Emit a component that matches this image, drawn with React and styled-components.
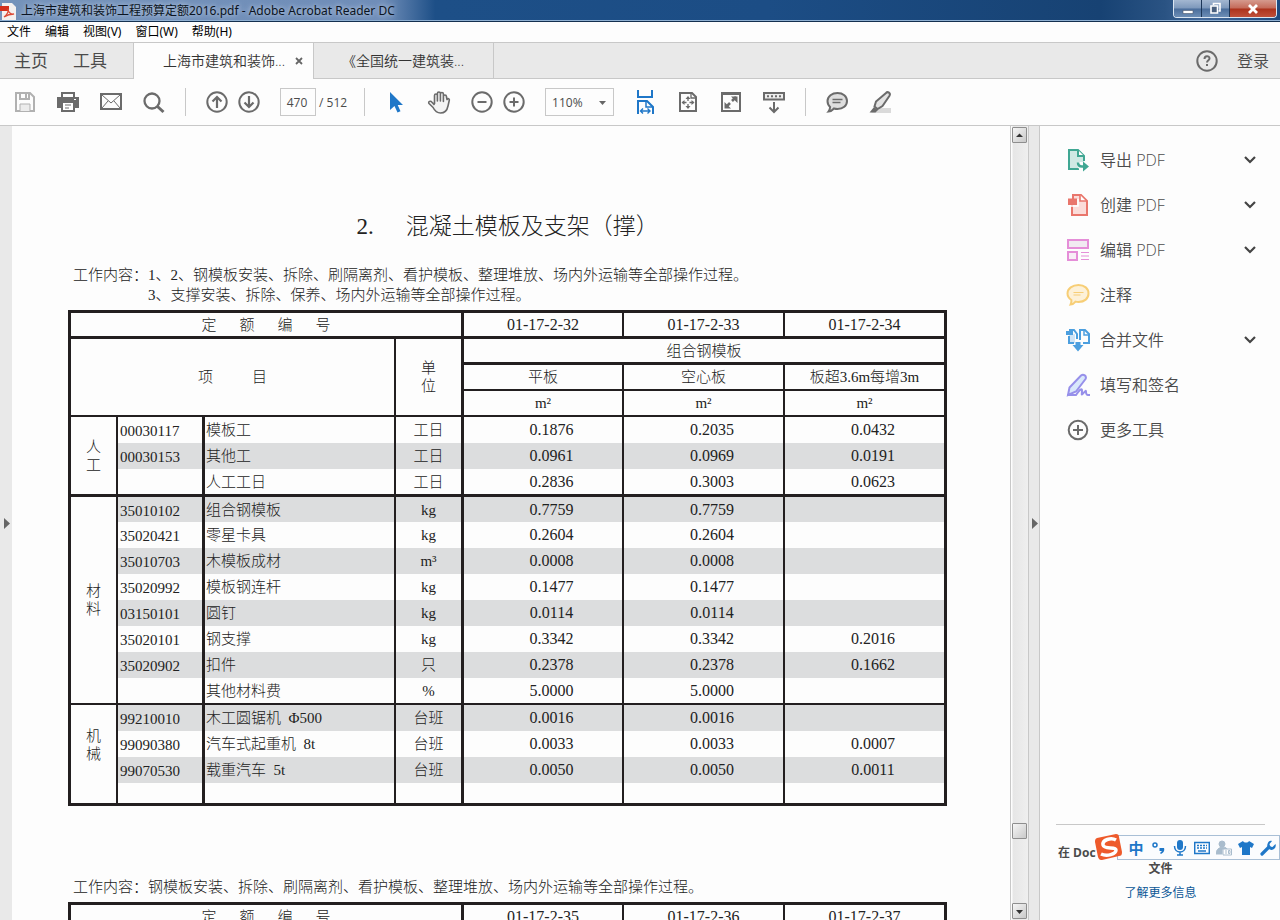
import React, { Fragment } from "react";
import styled, { createGlobalStyle, css } from "styled-components";

const colors = {
  icon: "#6b6b6b",
  text: "#4b4b4b",
  blue: "#1f77c8",
  line: "#c8c8c8",
  chrome: "#e9e9e9",
  paper: "#fdfdfd",
  ink: "#231f20",
  band: "#dcddde"
};

const fonts = {
  ui: '"Open Sans", "Noto Sans CJK SC", sans-serif',
  caption: '"Noto Sans", "Noto Sans CJK SC", sans-serif',
  page: '"Liberation Serif", "Noto Sans CJK SC", serif'
};

const GlobalStyle = createGlobalStyle`
  * {
    box-sizing: border-box;
  }
  body {
    margin: 0;
    background: ${colors.paper};
    font-family: ${fonts.ui};
    color: ${colors.text};
  }
  button {
    margin: 0;
    padding: 0;
    border: 0;
    background: none;
    color: inherit;
    font-family: inherit;
  }
`;

const Window = styled.div`
  display: flex;
  flex-direction: column;
  height: 100vh;
  overflow: hidden;
`;

/* title bar */

const TitleBar = styled.header`
  display: flex;
  flex: none;
  align-items: center;
  justify-content: space-between;
  height: 22px;
  border-bottom: 1px solid #14304f;
  box-shadow: inset 0 -1px 0 #8fb0d2;
  background: linear-gradient(
    90deg,
    #7593ba 0,
    #6f8db8 30%,
    #1d4f87 34%,
    #1c4d85 60%,
    #174273 86%,
    #2a5383 91%,
    #44699a 94%,
    #1d4a7f 100%
  );
`;

const Caption = styled.div`
  display: flex;
  align-items: center;
  gap: 5px;
  color: #0b1422;
  font-family: ${fonts.caption};
  font-size: 12px;
  line-height: 20px;
  white-space: nowrap;
  text-shadow: 0 0 6px #b9c9e0, 0 0 4px #a9bcd8;
`;

const WindowButtons = styled.div`
  display: flex;
  align-self: flex-start;
  margin-right: 3px;
  border: 1px solid #dbe6f2;
  border-top: 0;
  border-radius: 0 0 4px 4px;
  overflow: hidden;
`;

const WindowButton = styled.button`
  display: flex;
  align-items: center;
  justify-content: center;
  width: ${props => (props.$close ? 46 : 28)}px;
  height: 17px;
  border-right: ${props => (props.$close ? 0 : "1px solid #1c3658")};
  background: ${props =>
    props.$close
      ? "linear-gradient(#d59a8e 0, #c46a59 48%, #ac321c 52%, #c0503a 100%)"
      : "linear-gradient(#a3b7d1 0, #7d98bb 48%, #4a6d9b 52%, #6c8db5 100%)"};
`;

/* menu and tabs */

const MenuBar = styled.nav`
  display: flex;
  flex: none;
  align-items: center;
  gap: 14px;
  height: 20px;
  padding-left: 7px;
  font-family: ${fonts.caption};
`;

const MenuItem = styled.button`
  color: #000;
  font-size: 12px;
  line-height: 18px;
`;

const TabBar = styled.div`
  display: flex;
  flex: none;
  height: 37px;
  border-top: 1px solid ${colors.line};
  border-bottom: 1px solid ${colors.line};
  background: ${colors.chrome};
`;

const HomeTabs = styled.div`
  display: flex;
  gap: 25px;
  width: 134px;
  padding-left: 14px;
  border-right: 1px solid ${colors.line};
`;

const HomeTab = styled.button`
  font-size: 17px;
  line-height: 34px;
`;

const DocTab = styled.div`
  display: flex;
  align-items: center;
  width: 180px;
  height: ${props => (props.$active ? 36 : 35)}px;
  padding-left: ${props => (props.$active ? 29 : 28)}px;
  border-right: 1px solid ${colors.line};
  background: ${props => (props.$active ? colors.paper : "transparent")};
`;

const DocTabName = styled.button`
  color: #333;
  font-size: 14px;
  font-weight: 350;
  line-height: 34px;
  white-space: nowrap;
`;

const CloseTab = styled.button`
  display: flex;
  margin-left: 10px;
`;

const Account = styled.div`
  display: flex;
  align-items: center;
  gap: 18px;
  margin-left: auto;
  padding-right: 11px;
`;

const SignIn = styled.button`
  font-size: 16px;
  font-weight: 350;
  line-height: 34px;
`;

/* toolbar */

const Toolbar = styled.div`
  display: flex;
  flex: none;
  align-items: center;
  height: 47px;
  padding-left: 13px;
  border-bottom: 1px solid ${colors.line};
`;

const ToolGroup = styled.div`
  display: flex;
  align-items: center;
  gap: ${props => props.$gap}px;
`;

const ToolButton = styled.button`
  display: flex;
  width: 24px;
  height: 24px;
`;

const Divider = styled.span`
  width: 1px;
  height: 28px;
  margin: 0 ${props => props.$after}px 0 ${props => props.$before}px;
  background: ${colors.line};
`;

const PageBox = styled.label`
  display: flex;
  align-items: center;
  gap: 3px;
  margin-left: 19px;
  font-size: 12px;
`;

const PageInput = styled.input`
  width: 36px;
  height: 28px;
  padding: 0 2px 0 0;
  border: 1px solid ${colors.line};
  background: ${colors.paper};
  color: ${colors.text};
  font-family: ${fonts.ui};
  font-size: 12px;
  text-align: center;
`;

const ZoomBox = styled.span`
  display: flex;
  align-items: center;
  width: 69px;
  height: 28px;
  margin: 0 19px;
  padding-right: 6px;
  border: 1px solid ${colors.line};
`;

const ZoomSelect = styled.select`
  flex: 1;
  min-width: 0;
  padding-left: 6px;
  border: 0;
  appearance: none;
  background: transparent;
  color: ${colors.text};
  font-family: ${fonts.ui};
  font-size: 12px;
`;

/* body */

const Body = styled.div`
  display: flex;
  flex: 1;
  min-height: 0;
`;

const Gutter = styled.button`
  display: flex;
  flex: none;
  align-items: center;
  justify-content: center;
  width: 12px;
  background: ${colors.chrome};
`;

const Splitter = styled(Gutter)`
  border-left: 1px solid ${colors.line};
  border-right: 1px solid ${colors.line};
`;

const Viewer = styled.main`
  flex: 1;
  min-width: 0;
  padding: 85px 63px 0 56px;
  overflow: hidden;
  color: #222;
  font-family: ${fonts.page};
  font-weight: 300;
`;

const Scrollbar = styled.div`
  display: flex;
  flex: none;
  flex-direction: column;
  justify-content: space-between;
  width: 18px;
  border-left: 1px solid ${colors.line};
  background: linear-gradient(90deg, #fdfdfd 1px, #e6e6e6 2px, #efefef 100%);
`;

const ScrollButton = styled.button`
  display: flex;
  align-items: center;
  justify-content: center;
  width: 15px;
  height: 16px;
  margin: 1px 0 1px 1px;
  border: 1px solid #8e8e8e;
  border-radius: 1px;
  background: linear-gradient(135deg, #f6f6f6, #c9c9c9);
`;

const ScrollThumb = styled(ScrollButton)`
  margin-top: auto;
  margin-bottom: 63px;
`;

const PageTitle = styled.h1`
  display: flex;
  justify-content: center;
  gap: 32px;
  margin: 0 0 22px;
  font-size: 23px;
  font-weight: 300;
  line-height: 32px;
`;

const Notes = styled.div`
  display: flex;
  margin-bottom: 5px;
  padding-left: 5px;
  font-size: 15px;
  line-height: 20px;
  white-space: nowrap;
`;

const NoteLines = styled.div`
  display: flex;
  flex-direction: column;
`;

const Quota = styled.table`
  width: 100%;
  margin-bottom: 71px;
  border: 3px solid ${colors.ink};
  border-spacing: 0;
  table-layout: fixed;
  font-size: 15px;
  line-height: 18px;
`;

const cell = css`
  height: ${props => props.$height || 26}px;
  padding: 0;
  border: 0 solid ${colors.ink};
  border-left-width: ${props => props.$bl || 0}px;
  border-top-width: ${props => props.$bt || 0}px;
  font-weight: 300;
  text-align: center;
  white-space: pre;
`;

const Head = styled.th`
  ${cell};
`;

const Cell = styled.td`
  ${cell};
  background: ${props => (props.$band ? colors.band : "transparent")};
`;

const NameCell = styled(Cell)`
  padding-left: 1px;
  text-align: left;
`;

const NumberCell = styled(Cell)`
  padding-left: 17px;
  font-size: 16px;
`;

const CodeCell = styled(Cell)`
  padding: 2px 0 0 2px;
  text-align: left;
`;

const Code = styled.span`
  font-size: 16px;
`;

const Spread = styled.span`
  display: flex;
  justify-content: center;
  gap: ${props => props.$gap}px;
`;

const Stack = styled.span`
  display: flex;
  flex-direction: column;
  align-items: center;
  padding-bottom: ${props => props.$bottom || 0}px;
`;

/* right pane */

const ToolsPane = styled.aside`
  position: relative;
  display: flex;
  flex: none;
  flex-direction: column;
  width: 240px;
  padding: 12px 15px 0 16px;
`;

const ToolLink = styled.button`
  display: flex;
  align-items: center;
  gap: 10px;
  width: 100%;
  height: 45px;
  padding: 0 8px 2px 10px;
  font-size: 16px;
  font-weight: 350;
  line-height: 24px;
  text-align: left;
`;

const ToolLabel = styled.span`
  flex: 1;
`;

const Promo = styled.div`
  display: flex;
  flex-direction: column;
  height: 96px;
  margin-top: auto;
  padding-top: 20px;
  border-top: 1px solid ${colors.line};
  font-size: 12px;
  font-weight: 700;
  line-height: 16px;
`;

const PromoLead = styled.span`
  padding-left: 2px;
`;

const PromoTail = styled.span`
  text-align: center;
`;

const PromoLink = styled.a`
  margin-top: 8px;
  color: #0b5796;
  font-weight: 400;
  text-align: center;
  text-decoration: none;
`;

const InputBar = styled.div`
  position: absolute;
  right: 0;
  bottom: 60px;
  display: flex;
  align-items: center;
  gap: 6px;
  height: 25px;
  padding: 0 3px 0 10px;
  border: 1px solid #a9bfd6;
  background: #fbfcfe;
`;

const InputLogo = styled.svg`
  position: absolute;
  left: -23px;
  bottom: -2px;
`;

const InputButton = styled.button`
  display: flex;
  align-items: center;
  justify-content: center;
  width: 16px;
  height: 18px;
  color: ${colors.blue};
  font-size: 15px;
  font-weight: 700;
  line-height: 18px;
`;

const Icon = ({ size = 24, color = colors.icon, width = 2, children }) => (
  <svg
    width={size}
    height={size}
    viewBox={`0 0 ${size} ${size}`}
    fill="none"
    stroke={color}
    strokeWidth={width}
    aria-hidden="true"
  >
    {children}
  </svg>
);

const trianglePaths = {
  right: "M2 0v11l6-5.500z",
  up: "M1 7h7L4.500 3.500z",
  down: "M1 4h7L4.500 8z"
};

const Triangle = ({ dir = "right", color = "#666" }) => (
  <svg width="9" height="11" fill={color} aria-hidden="true">
    <path d={trianglePaths[dir]} />
  </svg>
);

const icons = {
  save: (
    <Icon color="#b1b1b1">
      <path d="M3 3h14l4 4v14H3z" />
      <path d="M7 3v6h9V3M13 4v4" />
      <path d="M7 21v-7h10v7" fill="#ececec" strokeWidth="1" />
    </Icon>
  ),
  print: (
    <Icon>
      <path d="M6 7V3h12v4" />
      <path d="M1 7h22v11H1z" fill={colors.icon} stroke="none" />
      <path d="M6 12h12v9H6z" fill="#fff" />
      <path d="M9 15h6M9 18h4" strokeWidth="1" />
      <path d="M18 9.500h2" stroke="#fff" strokeWidth="1" />
    </Icon>
  ),
  mail: (
    <Icon>
      <path d="M2 4h20v15H2z" />
      <path d="M3 5l9 8 9-8M3 18l6-7M21 18l-6-7" strokeWidth="1" />
    </Icon>
  ),
  search: (
    <Icon>
      <circle cx="10" cy="11" r="7.500" strokeWidth="2.300" />
      <path d="M15.500 16.500l6 5.500" strokeWidth="3" />
    </Icon>
  ),
  up: (
    <Icon>
      <circle cx="12" cy="12" r="9.700" />
      <path d="M12 18V7M7.500 11.500L12 7l4.500 4.500" strokeWidth="2.200" />
    </Icon>
  ),
  down: (
    <Icon>
      <circle cx="12" cy="12" r="9.700" />
      <path d="M12 6v11M7.500 12.500L12 17l4.500-4.500" strokeWidth="2.200" />
    </Icon>
  ),
  pointer: (
    <Icon>
      <path
        d="M6 2v18l4.500-4 3 6.500 3-1.300-2.800-6.200H19z"
        fill={colors.blue}
        stroke="none"
      />
    </Icon>
  ),
  hand: (
    <Icon width={1.6}>
      <path
        d="M7.500 14V5.500c0-2 2.900-2 2.900 0V11 3.500c0-2 3-2 3 0V11 4c0-2 3-2 3 0v7.500-5c0-2 3-2 3 0l.6 3c.8-1.500 2.800-1 2.300.8L21 16c-1 5-3.500 7-7.500 7-4.200 0-5.700-2-7.400-5.500L2 13.500c-1.200-2 1.500-3.200 3-1.300L7.500 15"
        fill="#f4f4f4"
        strokeLinejoin="round"
      />
    </Icon>
  ),
  minus: (
    <Icon>
      <circle cx="12" cy="12" r="9.700" />
      <path d="M7.500 12h9" />
    </Icon>
  ),
  plus: (
    <Icon>
      <circle cx="12" cy="12" r="9.700" />
      <path d="M7.500 12h9M12 7.500v9" />
    </Icon>
  ),
  fitWidth: (
    <Icon color={colors.blue}>
      <path d="M5 0v7h14V0" />
      <path d="M5 24V11h9l6 6v7" />
      <path d="M13 11v6h6" strokeWidth="1.500" />
      <path
        d="M8 21h9M10 18.500L7.500 21l2.500 2.500M14.500 18.500L17 21l-2.500 2.500"
        strokeWidth="1.400"
      />
    </Icon>
  ),
  fitPage: (
    <Icon>
      <path d="M4 3h12l4 4v14H4z" />
      <path d="M15 3v5h5" strokeWidth="1.300" />
      <path d="M12 7v4M12 14v4M6.500 12.500h4M13.500 12.500h4" strokeWidth="1.300" />
      <path
        d="M9.500 9l2.500-3 2.500 3zM9.500 16l2.500 3 2.500-3zM8.500 10l-3 2.500 3 2.500zM15.500 10l3 2.500-3 2.500z"
        fill={colors.icon}
        stroke="none"
      />
    </Icon>
  ),
  fullscreen: (
    <Icon>
      <path d="M3 3h18v18H3z" />
      <path d="M3 3.500h18" strokeWidth="3" />
      <path d="M13 11l4-4M11 13l-4 4" strokeWidth="2.600" />
      <path
        d="M12 6.500h6.500V13zM5.500 12v6.500H12z"
        fill={colors.icon}
        stroke="none"
      />
    </Icon>
  ),
  keyboardDown: (
    <Icon>
      <path d="M2 3h20v6.500H2z" fill="#eee" />
      <path d="M5 6.300h14" strokeDasharray="2 2" />
      <path d="M12 12v10M7.500 17.500L12 22l4.500-4.500" />
    </Icon>
  ),
  comment: (
    <Icon>
      <path
        d="M12.500 3c5.500 0 9.500 3.300 9.500 8s-4 8-9.500 8c-1.500 0-2.500-.2-3.500-.5-1.500 1.700-3.200 2.800-5.500 3 1.200-1.500 1.600-2.800 1.600-4.500C3.500 15.600 2.500 13.500 2.500 11c0-4.700 4.500-8 10-8z"
        fill="#dedede"
      />
      <path d="M7.500 9.500h10M7.500 12.500h8" strokeWidth="1.300" />
    </Icon>
  ),
  highlight: (
    <Icon>
      <path d="M8 18h15v5H3z" fill="#dadada" stroke="none" />
      <path d="M18 3c1.700-2 5 0 3.500 2.700L14.500 16l-5 3-3-2.500 1.500-5z" fill="#e3e3e3" />
      <path d="M6 17l4 3-2.500 2.500H1.500z" fill={colors.icon} stroke="none" />
    </Icon>
  ),
  help: (
    <Icon>
      <circle cx="12" cy="12" r="9.700" />
      <path d="M9.500 10c0-3.500 5-3.500 5-.6 0 1.800-2.500 1.800-2.500 4.200M12 15v2" />
    </Icon>
  ),
  exportPdf: (
    <Icon color="#40a793">
      <path d="M13 21H3V2h9l6 6v5" fill="#cfe9e4" />
      <path d="M12 2v6h6" fill="#fff" />
      <path d="M11 17c0-3 3-3 5-3h7v9h-9z" fill={colors.paper} stroke="none" />
      <path d="M12 14.500c0 3.500 2 4 4 4h3" strokeWidth="2.500" />
      <path d="M17 13.500l6 5-6 5z" fill="#40a793" stroke="none" />
    </Icon>
  ),
  createPdf: (
    <Icon color="#e9766c">
      <path d="M6 12v10h15V8l-6-6H7v4" fill="#fbdcd9" />
      <path d="M14 2v6h6" fill="#fff" strokeWidth="1.600" />
      <path d="M2 5.500h9v6.500H2z" fill="#e9766c" stroke="none" />
      <path d="M3 13h9V6" stroke="#fff" strokeWidth="1.500" />
    </Icon>
  ),
  editPdf: (
    <Icon color="#e58ed8">
      <path d="M2 2h20v8H2z" fill="#f1eaf1" />
      <path d="M2 14h9v8H2z" fill="#f8eef6" />
      <path d="M15 14.500h8M15 18h8M15 21.500h8" strokeWidth="1.200" />
    </Icon>
  ),
  note: (
    <Icon color="#f7ce76">
      <path
        d="M12.500 2c6 0 10 3.500 10 8.500s-4 8.500-10 8.500c-1 0-2-.1-3-.4-1.500 1.900-3.300 2.900-5 3 .8-1.600 1.100-3 .9-4.600C3 15.400 1.500 13.300 1.500 10.500 1.500 5.500 6.500 2 12.500 2z"
        fill="#fdf1d8"
      />
      <path d="M7.500 9.500h10M7.500 12h7" strokeWidth="1.200" />
    </Icon>
  ),
  combine: (
    <Icon color="#4c9fdf">
      <path d="M3 7v8h6V6" fill="#cfe4f6" stroke="none" />
      <path d="M3 8v7h5M3 2h5l3 4v5M14 12V2h5l4 4v9h-6" />
      <path d="M18 2v5h5" strokeWidth="1.500" />
      <path d="M0 3h7v4H0z" fill="#4c9fdf" stroke="none" />
      <path
        d="M9.500 14h5v3h3L12 23.500 6.500 17h3z"
        fill="#4c9fdf"
        stroke="none"
      />
    </Icon>
  ),
  sign: (
    <Icon color="#9790ea">
      <path d="M15 2.500c2.500-2 6 .5 4.500 3.500L10 18.500 2 22l1.500-7.500z" fill="#d9e8fb" />
      <path d="M1 22h9c4-6 6-7 6-4.500 0 4-1 5 1 3s3-4 3-1.500c0 3 1 3 4 3" />
    </Icon>
  ),
  more: (
    <Icon>
      <circle cx="12" cy="12" r="9.300" />
      <path d="M7 12h10M12 7v10" />
    </Icon>
  )
};

const fileTools = [
  ["save", "保存"],
  ["print", "打印"],
  ["mail", "邮件"],
  ["search", "查找"]
];
const viewTools = [
  ["fitWidth", "适合宽度"],
  ["fitPage", "适合页面"],
  ["fullscreen", "全屏"],
  ["keyboardDown", "工具栏"]
];

const sideTools = [
  { icon: "exportPdf", label: "导出 PDF", open: true },
  { icon: "createPdf", label: "创建 PDF", open: true },
  { icon: "editPdf", label: "编辑 PDF", open: true },
  { icon: "note", label: "注释" },
  { icon: "combine", label: "合并文件", open: true },
  { icon: "sign", label: "填写和签名" },
  { icon: "more", label: "更多工具" }
];

const groups = [
  {
    label: "人工",
    border: 2,
    lastHeight: 25,
    rows: [
      ["00030117", "模板工", "工日", "0.1876", "0.2035", "0.0432"],
      ["00030153", "其他工", "工日", "0.0961", "0.0969", "0.0191"],
      ["", "人工工日", "工日", "0.2836", "0.3003", "0.0623"]
    ]
  },
  {
    label: "材料",
    border: 3,
    lastHeight: 25,
    bandFirst: true,
    rows: [
      ["35010102", "组合钢模板", "kg", "0.7759", "0.7759", ""],
      ["35020421", "零星卡具", "kg", "0.2604", "0.2604", ""],
      ["35010703", "木模板成材", "m³", "0.0008", "0.0008", ""],
      ["35020992", "模板钢连杆", "kg", "0.1477", "0.1477", ""],
      ["03150101", "圆钉", "kg", "0.0114", "0.0114", ""],
      ["35020101", "钢支撑", "kg", "0.3342", "0.3342", "0.2016"],
      ["35020902", "扣件", "只", "0.2378", "0.2378", "0.1662"],
      ["", "其他材料费", "%", "5.0000", "5.0000", ""]
    ]
  },
  {
    label: "机械",
    border: 2,
    lastHeight: 20,
    bandFirst: true,
    bottom: 18,
    rows: [
      ["99210010", "木工圆锯机  Φ500", "台班", "0.0016", "0.0016", ""],
      ["99090380", "汽车式起重机  8t", "台班", "0.0033", "0.0033", "0.0007"],
      ["99070530", "载重汽车  5t", "台班", "0.0050", "0.0050", "0.0011"],
      ["", "", "", "", "", ""]
    ]
  }
];

const ToolButtons = ({ items }) =>
  items.map(([icon, label]) => (
    <ToolButton key={icon} aria-label={label}>
      {icons[icon]}
    </ToolButton>
  ));

const Col = styled.col`
  width: ${props => props.$width}px;
`;

const Columns = () => (
  <colgroup>
    <Col $width={45} />
    <Col $width={86} />
    <Col $width={192} />
    <Col $width={67} />
    <col />
    <col />
    <col />
  </colgroup>
);

const QuotaNumbers = ({ codes }) => (
  <tr>
    <Head colSpan={4} $height={23}>
      <Spread $gap={23}>
        {"定额编号".split("").map(char => (
          <span key={char}>{char}</span>
        ))}
      </Spread>
    </Head>
    {codes.map((code, i) => (
      <Head key={code} $height={23} $bl={i ? 2 : 3}>
        <Code>{code}</Code>
      </Head>
    ))}
  </tr>
);

const QuotaGroup = ({ group }) => {
  const last = group.rows.length - 1;
  return (
    <tbody>
      {group.rows.map(([code, name, unit, ...values], i) => {
        const top = i ? 0 : group.border;
        const shared = {
          $bt: top,
          $band: group.bandFirst ? i % 2 === 0 : i % 2 === 1,
          $height: i === 0 ? 28 : i === last ? group.lastHeight : 26
        };
        if (i === last) shared.$band = false;
        return (
          <tr key={i}>
            {i === 0 && (
              <Head rowSpan={group.rows.length} $bt={top}>
                <Stack $bottom={group.bottom}>
                  {group.label.split("").map(char => (
                    <span key={char}>{char}</span>
                  ))}
                </Stack>
              </Head>
            )}
            <CodeCell {...shared} $bl={2}>
              {code}
            </CodeCell>
            <NameCell {...shared} $bl={3}>
              {name}
            </NameCell>
            <Cell {...shared} $bl={2}>
              {unit}
            </Cell>
            {values.map((value, j) => (
              <NumberCell key={j} {...shared} $bl={j ? 2 : 3}>
                {value}
              </NumberCell>
            ))}
          </tr>
        );
      })}
    </tbody>
  );
};

const DocumentPage = () => (
  <Viewer>
    <PageTitle>
      <span>2.</span>
      <span>混凝土模板及支架（撑）</span>
    </PageTitle>
    <Notes>
      <span>工作内容：</span>
      <NoteLines>
        <span>
          1、2、钢模板安装、拆除、刷隔离剂、看护模板、整理堆放、场内外运输等全部操作过程。
        </span>
        <span>3、支撑安装、拆除、保养、场内外运输等全部操作过程。</span>
      </NoteLines>
    </Notes>
    <Quota>
      <Columns />
      <thead>
        <QuotaNumbers codes={["01-17-2-32", "01-17-2-33", "01-17-2-34"]} />
        <tr>
          <Head colSpan={3} rowSpan={3} $bt={3}>
            <Spread $gap={39}>
              <span>项</span>
              <span>目</span>
            </Spread>
          </Head>
          <Head rowSpan={3} $bt={3} $bl={2}>
            <Stack>
              <span>单</span>
              <span>位</span>
            </Stack>
          </Head>
          <Head colSpan={3} $bt={3} $bl={3}>
            组合钢模板
          </Head>
        </tr>
        <tr>
          {["平板", "空心板", "板超3.6m每增3m"].map((name, i) => (
            <Head key={name} $bt={3} $bl={i ? 2 : 3} $height={27}>
              {name}
            </Head>
          ))}
        </tr>
        <tr>
          {[3, 2, 2].map((border, i) => (
            <Head key={i} $bt={2} $bl={border}>
              m²
            </Head>
          ))}
        </tr>
      </thead>
      {groups.map(group => (
        <QuotaGroup key={group.label} group={group} />
      ))}
    </Quota>
    <Notes>
      <span>
        工作内容：钢模板安装、拆除、刷隔离剂、看护模板、整理堆放、场内外运输等全部操作过程。
      </span>
    </Notes>
    <Quota>
      <Columns />
      <thead>
        <QuotaNumbers codes={["01-17-2-35", "01-17-2-36", "01-17-2-37"]} />
      </thead>
    </Quota>
  </Viewer>
);

const InputMethod = () => (
  <InputBar>
    <InputLogo width="28" height="28" viewBox="0 0 28 28" aria-hidden="true">
      <path
        d="M2 5L21 1c2 0 3 1 3 3l3 15c0 3-1 4-3 4L7 27c-3 0-3-1-4-3L0 9c0-2 0-3 2-4z"
        fill="#ee5a2b"
      />
      <path
        d="M21 7C16 4 7 7 8 12s13 1 13 5-9 7-15 4"
        fill="none"
        stroke="#fff"
        strokeWidth="3.500"
      />
    </InputLogo>
    <InputButton>中</InputButton>
    <InputButton aria-label="标点">
      <Icon size={16} color={colors.blue} width={1.5}>
        <circle cx="5" cy="5" r="2" />
        <path
          d="M9.500 8H14c1 3-1 5-3 6l-1-1 2-2H9.500z"
          fill={colors.blue}
          stroke="none"
        />
      </Icon>
    </InputButton>
    <InputButton aria-label="语音">
      <Icon size={16} color={colors.blue} width={1.5}>
        <rect x="5" y="0" width="6" height="10" rx="3" fill={colors.blue} stroke="none" />
        <path d="M2.500 6c0 8 11 8 11 0M8 12v3M5 15h6" />
      </Icon>
    </InputButton>
    <InputButton aria-label="软键盘">
      <Icon size={16} color={colors.blue} width={1.5}>
        <rect x="0.700" y="2.500" width="14.600" height="11" />
        <path d="M3 5.500h10M3 8h10" strokeDasharray="2 1" />
        <path d="M4 11h8" />
      </Icon>
    </InputButton>
    <InputButton aria-label="登录">
      <Icon size={16} color="#a9bccd" width={1}>
        <circle cx="6" cy="4" r="3" fill="#a9bccd" />
        <path d="M0 14c0-8 10-8 11-5H6v5z" fill="#a9bccd" />
        <path d="M7 9h8.500v6H7zM10 10v4M12.500 10.500h1.500v3h-1.500z" fill="#fff" />
      </Icon>
    </InputButton>
    <InputButton aria-label="皮肤">
      <Icon size={16} color={colors.blue}>
        <path
          d="M5 1c1 2 5 2 6 0l5 3-2 4-2-1v8H4V7L2 8 0 4z"
          fill={colors.blue}
          stroke="none"
        />
      </Icon>
    </InputButton>
    <InputButton aria-label="设置">
      <Icon size={16} color={colors.blue}>
        <path d="M2 14l7-7" strokeWidth="3.200" strokeLinecap="round" />
        <path
          d="M12 1L9.500 4l.5 2.500 2.500.5L15.500 4c1 3-1 6-4 6S6.500 7 7.500 4 10 .5 12 1z"
          fill={colors.blue}
          stroke="none"
        />
      </Icon>
    </InputButton>
  </InputBar>
);

const App = () => (
  <Fragment>
    <GlobalStyle />
    <Window>
      <TitleBar>
        <Caption>
          <svg width="16" height="18" aria-hidden="true">
            <path d="M2 1h10l4 4v13H2z" fill="#f4f0ee" />
            <path d="M0 4h9v5H0z" fill="#d3301d" />
            <path
              d="M4 15c3-2 5-6 4-8 0 3 3 6 6 5-4 0-7 1-10 3z"
              fill="none"
              stroke="#dc4a36"
              strokeWidth="1.300"
            />
          </svg>
          上海市建筑和装饰工程预算定额2016.pdf - Adobe Acrobat Reader DC
        </Caption>
        <WindowButtons>
          <WindowButton aria-label="最小化">
            <svg width="12" height="12">
              <path d="M1 7.500h10v3H1z" fill="#fff" stroke="#49566b" strokeWidth=".6" />
            </svg>
          </WindowButton>
          <WindowButton aria-label="还原">
            <svg width="13" height="13" fill="none" stroke="#fff" strokeWidth="1.600">
              <path d="M4.500 3V1.500H11V9H9.500" />
              <path d="M2 4h6.500v7H2z" fill="#49607f" />
            </svg>
          </WindowButton>
          <WindowButton $close aria-label="关闭">
            <svg width="12" height="10" stroke="#fff" strokeWidth="2.800">
              <path d="M2 1l8 8M10 1L2 9" />
            </svg>
          </WindowButton>
        </WindowButtons>
      </TitleBar>
      <MenuBar>
        {["文件", "编辑", "视图(V)", "窗口(W)", "帮助(H)"].map(name => (
          <MenuItem key={name}>{name}</MenuItem>
        ))}
      </MenuBar>
      <TabBar>
        <HomeTabs>
          <HomeTab>主页</HomeTab>
          <HomeTab>工具</HomeTab>
        </HomeTabs>
        <DocTab $active>
          <DocTabName>上海市建筑和装饰...</DocTabName>
          <CloseTab aria-label="关闭标签">
            <svg width="8" height="8" stroke="#666" strokeWidth="1.800">
              <path d="M1 1l6 6M7 1L1 7" />
            </svg>
          </CloseTab>
        </DocTab>
        <DocTab>
          <DocTabName>《全国统一建筑装...</DocTabName>
        </DocTab>
        <Account>
          <ToolButton aria-label="帮助">{icons.help}</ToolButton>
          <SignIn>登录</SignIn>
        </Account>
      </TabBar>
      <Toolbar>
        <ToolGroup $gap={19}>
          <ToolButtons items={fileTools} />
        </ToolGroup>
        <Divider $before={19} $after={19} />
        <ToolGroup $gap={8}>
          <ToolButtons items={[["up", "上一页"], ["down", "下一页"]]} />
        </ToolGroup>
        <PageBox>
          <PageInput defaultValue="470" aria-label="页码" />/ 512
        </PageBox>
        <Divider $before={17} $after={19} />
        <ToolGroup $gap={19}>
          <ToolButtons items={[["pointer", "选择"], ["hand", "抓手"]]} />
          <ToolGroup $gap={8}>
            <ToolButtons items={[["minus", "缩小"], ["plus", "放大"]]} />
          </ToolGroup>
        </ToolGroup>
        <ZoomBox>
          <ZoomSelect defaultValue="110%" aria-label="缩放">
            <option>110%</option>
          </ZoomSelect>
          <Triangle dir="down" />
        </ZoomBox>
        <ToolGroup $gap={19}>
          <ToolButtons items={viewTools} />
        </ToolGroup>
        <Divider $before={19} $after={19} />
        <ToolGroup $gap={19}>
          <ToolButtons items={[["comment", "注释"], ["highlight", "高亮"]]} />
        </ToolGroup>
      </Toolbar>
      <Body>
        <Gutter aria-label="展开导览">
          <Triangle />
        </Gutter>
        <DocumentPage />
        <Scrollbar>
          <ScrollButton aria-label="向上滚动">
            <Triangle dir="up" color="#333" />
          </ScrollButton>
          <ScrollThumb aria-label="滚动" />
          <ScrollButton aria-label="向下滚动">
            <Triangle dir="down" color="#333" />
          </ScrollButton>
        </Scrollbar>
        <Splitter aria-label="收起工具">
          <Triangle />
        </Splitter>
        <ToolsPane>
          {sideTools.map(tool => (
            <ToolLink key={tool.icon}>
              {icons[tool.icon]}
              <ToolLabel>{tool.label}</ToolLabel>
              {tool.open && (
                <svg width="14" height="10" fill="none" stroke="#444" strokeWidth="2.200">
                  <path d="M2 2l5 5 5-5" />
                </svg>
              )}
            </ToolLink>
          ))}
          <Promo>
            <PromoLead>在 Doc</PromoLead>
            <PromoTail>文件</PromoTail>
            <PromoLink href="#more">了解更多信息</PromoLink>
          </Promo>
          <InputMethod />
        </ToolsPane>
      </Body>
    </Window>
  </Fragment>
);

export default App;
